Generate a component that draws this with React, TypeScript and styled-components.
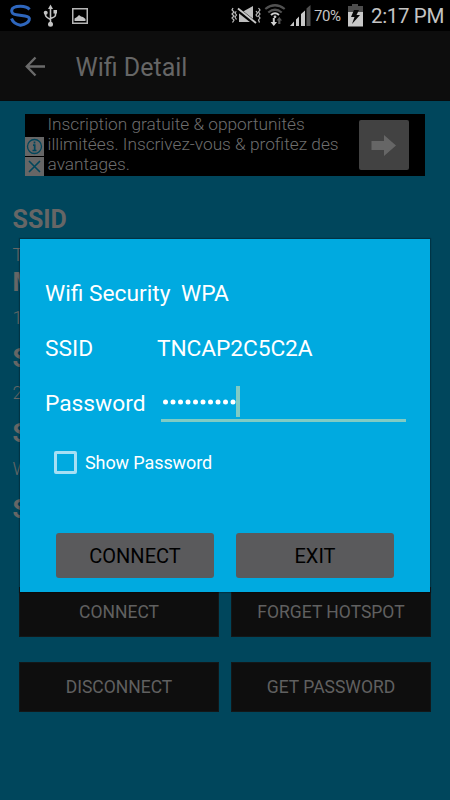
import React from "react";
import styled, { createGlobalStyle } from "styled-components";

const GlobalStyle = createGlobalStyle`
  * { box-sizing: border-box; }
  body { margin: 0; background: #00465c; font-family: Roboto, sans-serif; }
  button { font-family: inherit; }
`;

const Screen = styled.div`
  position: relative;
  width: 450px;
  height: 800px;
  overflow: hidden;
  background: #00465c;
  display: flex;
  flex-direction: column;
`;

const StatusBar = styled.header`
  flex: none;
  height: 31px;
  background: #000;
  display: flex;
  align-items: flex-start;
  color: #c4c4c4;
  svg { display: block; flex: none; }
`;

const StatusSpacer = styled.div`
  flex: 1;
`;

const Battery = styled.span`
  width: 33px;
  line-height: 32px;
  font-size: 15px;
  letter-spacing: -0.4px;
  white-space: nowrap;
`;

const Clock = styled.span`
  width: 79px;
  line-height: 32px;
  font-size: 20.5px;
  letter-spacing: -0.35px;
  white-space: nowrap;
`;

const AppBar = styled.div`
  flex: none;
  height: 70px;
  background: #0d0d0d;
  border-bottom: 1px solid #070b0d;
  display: flex;
  align-items: center;
  padding: 2px 0 0 25px;
  gap: 29.5px;
  svg { display: block; }
`;

const Title = styled.h1`
  margin: 2px 0 0;
  font-size: 25px;
  font-weight: 400;
  line-height: 30px;
  color: #666;
`;

const Ad = styled.section`
  flex: none;
  margin: 13px 25px 0;
  height: 62px;
  background: #000;
  display: flex;
`;

const AdBadges = styled.div`
  width: 19px;
  display: flex;
  flex-direction: column;
  justify-content: flex-end;
  gap: 1px;
  svg { display: block; }
`;

const AdCopy = styled.p`
  margin: 0 0 0 3.5px;
  width: 311.5px;
  font-size: 17.3px;
  font-weight: 300;
  line-height: 20px;
  color: #6e6e6e;
  white-space: nowrap;
`;

const AdLine = styled.span`
  display: block;
`;

const AdButton = styled.div`
  width: 50px;
  height: 50px;
  margin-top: 6px;
  border-radius: 2px;
  background: #424242;
  svg { display: block; }
`;

const Details = styled.dl`
  flex: none;
  margin: 30px 0 0 12.5px;
  height: 381px;
  color: #666;
`;

const Term = styled.dt`
  font-size: 25px;
  font-weight: 700;
  line-height: 28px;
  height: 28px;
`;

const Value = styled.dd<{ $after: number }>`
  margin: 9.5px 0 ${(p) => p.$after}px;
  font-size: 18px;
  font-weight: 300;
  line-height: 22px;
  height: 22px;
`;

const Actions = styled.div`
  flex: none;
  padding: 0 19px;
  display: grid;
  grid-template-columns: 200px 200px;
  column-gap: 12px;
  row-gap: 25px;
`;

const ActionButton = styled.button`
  height: 50px;
  padding: 0;
  border: 1px solid #131718;
  background: #0e0e0e;
  color: #606060;
  font-size: 17.5px;
`;

const Dialog = styled.div`
  position: absolute;
  left: 20px;
  top: 239px;
  width: 410px;
  height: 353px;
  background: #00aae0;
  box-shadow: 0 0 1px 1px rgba(0, 0, 0, 0.25);
  color: #fff;
  padding-left: 25px;
  display: flex;
  flex-direction: column;
`;

const FieldRow = styled.div<{ $label: number }>`
  height: 55px;
  display: grid;
  grid-template-columns: ${(p) => p.$label}px auto;
  line-height: 28px;
  font-size: 22.75px;
  &:first-child { margin-top: 41px; }
`;

const NetworkName = styled.span`
  letter-spacing: -0.1px;
`;

const PasswordField = styled.div`
  width: 245px;
  height: 36px;
  margin-top: -4px;
  border-bottom: 3px solid #80cbc4;
  display: flex;
  svg { display: block; }
`;

const CheckRow = styled.label`
  display: flex;
  align-items: center;
  height: 24px;
  margin: 5px 0 0 8.5px;
  gap: 8.5px;
  font-size: 18px;
  letter-spacing: -0.1px;
`;

const CheckBox = styled.span`
  width: 23px;
  height: 23px;
  border: 3px solid #a6dff4;
  border-radius: 2px;
`;

const DialogButtons = styled.div`
  display: flex;
  gap: 22px;
  margin: 59px 0 0 11px;
`;

const DialogButton = styled.button`
  width: 158px;
  height: 45px;
  padding: 0;
  border: 0;
  border-radius: 3px;
  background: #5a5a5c;
  color: #000;
  font-size: 20px;
`;

const LeftStatusIcons = () => (
  <svg width="100" height="31" viewBox="0 0 100 31" fill="none">
    <path d="M29.5 9.500C27.500 7 23.500 6.300 20.500 6.300C16 6.300 12 7.800 11.700 10.500C11.400 13.500 13.500 14.300 16.500 14.700L25 16C28.500 16.600 30 17.500 29.200 20C28.200 23 24 24.500 20.500 25.300C17 24.500 13 22.800 11.500 18.500" stroke="#2e66bd" strokeWidth="3" />
    <path d="M50.500 8V23.500M45.500 13V15Q45.500 17 50.500 19.500M55.500 12V15Q55.500 17 50.500 18.500" stroke="#c4c4c4" strokeWidth="1.600" />
    <path d="M50.500 4.500L53 9H48Z" fill="#c4c4c4" />
    <circle cx="50.500" cy="24.200" r="2.500" fill="#c4c4c4" />
    <circle cx="45.700" cy="12.700" r="2" fill="#c4c4c4" />
    <path d="M53.500 10H57V13.500H53.500Z" fill="#c4c4c4" />
    <rect x="72.750" y="8.750" width="14.500" height="14.500" stroke="#b5b5b5" strokeWidth="1.500" />
    <path d="M74.500 21V18.500L77 17L79 15L81 16.500L83 17L85.500 19V21Z" fill="#c4c4c4" />
  </svg>
);

const RightStatusIcons = () => (
  <svg width="83" height="31" viewBox="0 0 83 31" fill="none">
    <path d="M2 8L1 10L3 12L1 14L3 16L1 18L3 20L1.500 22.500M5.500 11L4 13L5.500 15L4 17L5.500 19.500M27.500 8L29 10L27.500 12L29 14L27.500 16L29 18L27.500 20L28.500 22.500M25 11L26.500 13L25 15L26.500 17" stroke="#bcbcbc" strokeWidth="1.200" />
    <path d="M8 11H13L22 6V22L14 22H8Z" fill="#bdbdbd" />
    <path d="M6 9L25 24" stroke="#000" strokeWidth="4.500" />
    <path d="M7 8.500L25 23" stroke="#c7c7c7" strokeWidth="1.900" />
    <path d="M34.300 9Q44 1.500 53.700 9M37.300 12.500Q44 7 50.700 12.500" stroke="#515151" strokeWidth="2.200" />
    <path d="M40 15Q44 11.500 48 15" stroke="#d0d0d0" strokeWidth="2" />
    <circle cx="44" cy="16.800" r="1.400" fill="#ccc" />
    <path d="M41.800 18H43.800V22H46L42.800 26L39.600 22H41.800Z" fill="#d0d0d0" />
    <path d="M47.200 24V20.500H45.500L48.300 17L51.100 20.500H49.400V24Z" fill="#555" />
    <path d="M59 26L63 21.500V26ZM65 26V19.500L68 16.500V26ZM70 26V14L74 10.500V26Z" fill="#c8c8c8" />
    <path d="M75.500 26V8.500L79.500 5V26Z" fill="#505050" />
  </svg>
);

const BatteryIcon = () => (
  <svg width="24" height="31" viewBox="0 0 24 31">
    <path d="M1 12V6H5V4H11V6H16V12Z" fill="#4d4d4d" />
    <path d="M1 12H16V26.500H1Z" fill="#c8c8c8" />
    <path d="M7 10L4 17H7.500L5 24L13 15H9.500L12 10Z" fill="#080808" />
  </svg>
);

const BackArrow = () => (
  <svg width="21" height="22" viewBox="0 0 21 22" fill="none" stroke="#6a6a6a" strokeWidth="2.400">
    <path d="M10.500 1.500L1.800 10.500L10.500 19.500M1.800 10.500H20" />
  </svg>
);

const details = [
  { term: "SSID", value: "T", after: 3.5 },
  { term: "M", value: "1", after: 16 },
  { term: "S", value: "2", after: 16 },
  { term: "S", value: "W", after: 16 },
];

export default function App() {
  return (
    <>
      <GlobalStyle />
      <Screen>
        <StatusBar>
          <LeftStatusIcons />
          <StatusSpacer />
          <RightStatusIcons />
          <Battery>70%</Battery>
          <BatteryIcon />
          <Clock>2:17 PM</Clock>
        </StatusBar>
        <AppBar>
          <BackArrow />
          <Title>Wifi Detail</Title>
        </AppBar>
        <Ad>
          <AdBadges>
            <svg width="19" height="19" viewBox="0 0 19 19" fill="none">
              <path fill="#666" d="M0 0H19V19H0Z" />
              <circle cx="9.500" cy="9.500" r="7" stroke="#00465c" strokeWidth="1.300" />
              <path d="M9.500 4.500V6.500M8 8.200H9.700V13.500M7.500 13.500H11.500" stroke="#00465c" strokeWidth="1.700" />
            </svg>
            <svg width="19" height="19" viewBox="0 0 19 19">
              <path fill="#666" d="M0 0H19V19H0Z" />
              <path d="M4 4L15 15M15 4L4 15" stroke="#00465c" strokeWidth="1.600" />
            </svg>
          </AdBadges>
          <AdCopy>
            <AdLine>Inscription gratuite &amp; opportunités</AdLine>
            <AdLine>illimitées. Inscrivez-vous &amp; profitez des</AdLine>
            <AdLine>avantages.</AdLine>
          </AdCopy>
          <AdButton>
            <svg width="50" height="50" viewBox="0 0 50 50">
              <path d="M12.500 21H25V15L37 25.500L25 36V30H12.500Z" fill="#666" />
            </svg>
          </AdButton>
        </Ad>
        <Details>
          {details.map((d, i) => (
            <React.Fragment key={i}>
              <Term>{d.term}</Term>
              <Value $after={d.after}>{d.value}</Value>
            </React.Fragment>
          ))}
          <Term>S</Term>
        </Details>
        <Actions>
          <ActionButton>CONNECT</ActionButton>
          <ActionButton>FORGET HOTSPOT</ActionButton>
          <ActionButton>DISCONNECT</ActionButton>
          <ActionButton>GET PASSWORD</ActionButton>
        </Actions>
        <Dialog role="dialog">
          <FieldRow $label={136}>
            <span>Wifi Security</span>
            <span>WPA</span>
          </FieldRow>
          <FieldRow $label={112}>
            <span>SSID</span>
            <NetworkName>TNCAP2C5C2A</NetworkName>
          </FieldRow>
          <FieldRow $label={116}>
            <span>Password</span>
            <PasswordField>
              <svg width="80" height="32" viewBox="0 0 80 32">
                {Array.from({ length: 10 }, (_, i) => (
                  <circle key={i} cx={4.500 + i * 7.500} cy="16" r="2.500" fill="#fff" />
                ))}
                <rect x="75" y="0" width="4" height="31" fill="#80cbc4" />
              </svg>
            </PasswordField>
          </FieldRow>
          <CheckRow>
            <CheckBox />
            Show Password
          </CheckRow>
          <DialogButtons>
            <DialogButton>CONNECT</DialogButton>
            <DialogButton>EXIT</DialogButton>
          </DialogButtons>
        </Dialog>
      </Screen>
    </>
  );
}
